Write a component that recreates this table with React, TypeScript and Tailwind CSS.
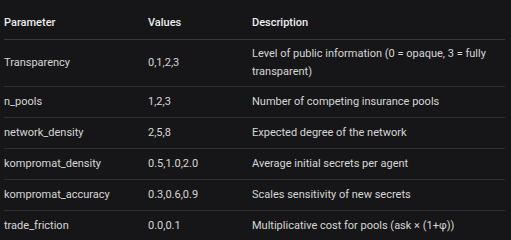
import React from "react";

const rows: [string, string, string][] = [
  ["Transparency", "0,1,2,3", "Level of public information (0 = opaque, 3 = fully transparent)"],
  ["n_pools", "1,2,3", "Number of competing insurance pools"],
  ["network_density", "2,5,8", "Expected degree of the network"],
  ["kompromat_density", "0.5,1.0,2.0", "Average initial secrets per agent"],
  ["kompromat_accuracy", "0.3,0.6,0.9", "Scales sensitivity of new secrets"],
  ["trade_friction", "0.0,0.1", "Multiplicative cost for pools (ask × (1+φ))"],
];

export default function App() {
  return (
    <div
      className="w-[511px] h-[240px] bg-[#161618] pl-[4px] pr-[6px] pt-[7px] overflow-hidden"
      style={{ fontFamily: "Roboto, 'Liberation Sans', sans-serif" }}
    >
      <table className="w-full border-collapse text-[11px] leading-[18px] text-[#d6d6d6]">
        <colgroup>
          <col className="w-[144px]" />
          <col className="w-[104px]" />
          <col />
        </colgroup>
        <thead>
          <tr className="border-b border-[#38383b]">
            <th className="h-[32px] text-left align-middle font-medium text-[#ececec] py-[5px] pr-2">Parameter</th>
            <th className="h-[32px] text-left align-middle font-medium text-[#ececec] py-[5px] pr-2">Values</th>
            <th className="h-[32px] text-left align-middle font-medium text-[#ececec] py-[5px] pr-2">Description</th>
          </tr>
        </thead>
        <tbody>
          {rows.map((r, i) => (
            <tr key={i} className={i < rows.length - 1 ? "border-b border-[#303033]" : ""}>
              <td className="h-[31px] align-middle py-[5px] pr-2">{r[0]}</td>
              <td className="h-[31px] align-middle py-[5px] pr-2">{r[1]}</td>
              <td className="h-[31px] align-middle py-[5px] pr-2">{r[2]}</td>
            </tr>
          ))}
        </tbody>
      </table>
    </div>
  );
}
